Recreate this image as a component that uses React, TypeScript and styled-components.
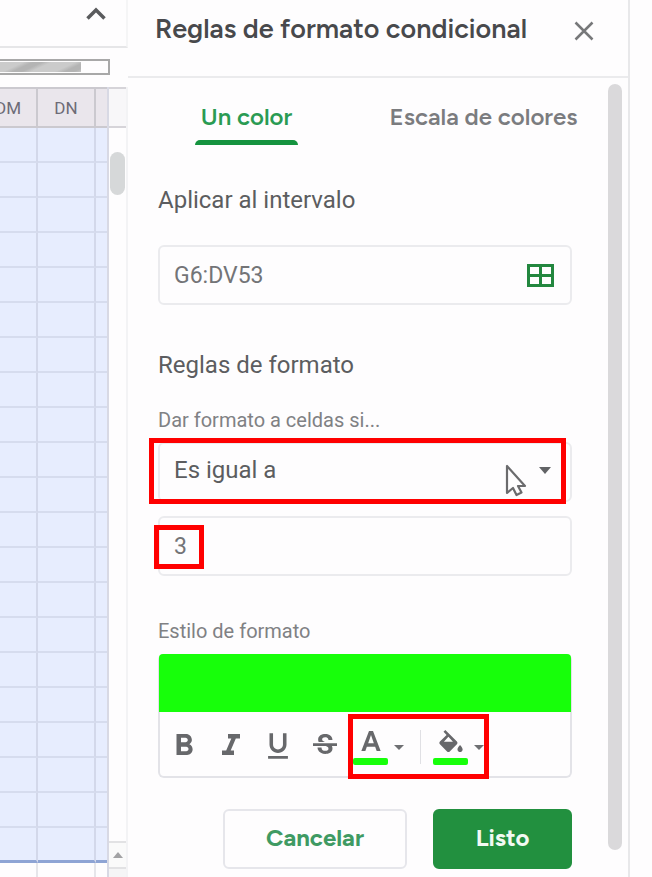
import React, { useState } from "react";
import styled, { createGlobalStyle } from "styled-components";
import {
  MdFormatBold,
  MdFormatItalic,
  MdFormatUnderlined,
  MdStrikethroughS,
} from "react-icons/md";

const GlobalStyle = createGlobalStyle`
  *, *::before, *::after { box-sizing: border-box; }
  body { margin: 0; background: #fefdfe; font-family: Roboto, sans-serif; }
  button, input, select { font: inherit; margin: 0; }
`;

const brand = '"Figtree", "Lato", sans-serif';

const Page = styled.div`
  display: flex;
  min-height: 100vh;
`;

/* ---------- spreadsheet strip ---------- */

const Sheet = styled.section`
  flex: 0 0 128px;
  display: flex;
  flex-direction: column;
  overflow: hidden;
`;

const SheetToolbar = styled.div`
  display: flex;
  justify-content: flex-end;
  height: 48px;
  padding: 6px 20px 0 0;
  border-bottom: 2px solid #e6e6e8;
  border-right: 2px solid #f5f5f6;
`;

const PlainButton = styled.button`
  display: grid;
  place-items: center;
  padding: 0;
  border: 0;
  background: none;
  color: #5a5b5d;
`;

const CollapseButton = styled(PlainButton)`
  width: 20px;
  height: 16px;
`;

const FormulaRow = styled.div`
  height: 39px;
  padding-top: 11px;
`;

const ProgressFrame = styled.div`
  width: 110px;
  height: 16px;
  padding: 1px 2px 1px 0;
  border: 2px solid #a8a8a8;
  border-left: 0;
`;

const ProgressFill = styled.div`
  width: 81px;
  height: 100%;
  background: repeating-linear-gradient(
    155deg,
    #cbcbcb 0 10px,
    #b4b4b4 14px 18px,
    #cbcbcb 22px
  );
`;

const SheetBody = styled.div`
  flex: 1;
  display: flex;
`;

const Cells = styled.table`
  width: 109px;
  align-self: flex-start;
  table-layout: fixed;
  border-collapse: separate;
  border-spacing: 0;
  border-right: 2px solid #d8d9e4;
`;

const ColumnHead = styled.th<{ $w: number }>`
  width: ${(p) => p.$w}px;
  height: 41px;
  padding: 0;
  border: solid #cbc9cf;
  border-width: 2px 2px 2px 0;
  background: #eae6ec;
  color: #6d6b76;
  font-size: 17px;
  font-weight: 400;
  &:last-child { border-right: 0; }
`;

const HeadText = styled.span<{ $clipped?: boolean }>`
  display: flex;
  justify-content: ${(p) => (p.$clipped ? "flex-end" : "center")};
  padding-right: ${(p) => (p.$clipped ? 15 : 0)}px;
`;

const Cell = styled.td<{ $last?: boolean }>`
  height: 35px;
  padding: 0;
  border: solid #d3d8ea;
  border-width: 0 2px 2px 0;
  border-bottom: ${(p) => (p.$last ? "3px solid #8ea4d4" : "2px solid #d6dcee")};
  background: #e7edfe;
  &:last-child { border-right: 0; }
`;

const EmptyCell = styled.td`
  height: 14px;
  padding: 0;
  border-right: 2px solid #e6e6ea;
  &:last-child { border-right: 0; }
`;

const SheetScroll = styled.div`
  flex: 1;
  display: flex;
  flex-direction: column;
  border-right: 2px solid #f3f3f5;
`;

const ScrollCorner = styled.div`
  height: 41px;
  background: #f8f7f9;
  border: solid #d6d4d9;
  border-width: 2px 0;
`;

const SheetThumb = styled.div`
  height: 43px;
  margin: 24px 1px 0;
  border-radius: 8px;
  background: #d6d8d9;
`;

const ScrollUp = styled(PlainButton)`
  height: 28px;
  margin-top: auto;
  border: solid #e2e2e4;
  border-width: 2px 0;
  background: #fafafa;
`;

const ScrollFoot = styled.div`
  height: 8px;
  background: #f5f5f6;
`;

/* ---------- side panel ---------- */

const Panel = styled.aside`
  flex: 1;
  min-width: 0;
  margin-right: 22px;
  display: flex;
  flex-direction: column;
  border-right: 2px solid #e8e8ea;
`;

const PanelHeader = styled.header`
  display: flex;
  align-items: center;
  justify-content: space-between;
  height: 78px;
  padding: 0 33px 18px 27px;
  border-bottom: 2px solid #ebebed;
`;

const Title = styled.h1`
  margin: 0;
  font: 600 27px/34px ${brand};
  color: #48494c;
  white-space: nowrap;
`;

const CloseButton = styled(PlainButton)`
  width: 22px;
  height: 22px;
  margin-top: 4px;
`;

const PanelBody = styled.div`
  flex: 1;
  display: flex;
`;

const ScrollTrack = styled.div`
  width: 20px;
  padding: 6px 6px 27px 0;
  display: flex;
`;

const ScrollThumb = styled.div`
  flex: 1;
  border-radius: 7px;
  background: #dad9db;
`;

const Content = styled.div`
  flex: 1;
  min-width: 0;
`;

const Tabs = styled.div`
  display: grid;
  grid-template-columns: 1fr 1fr;
  justify-items: center;
  height: 67px;
  margin-right: 6px;
`;

const Tab = styled.button<{ $active?: boolean }>`
  position: relative;
  padding: 10px 6px 0;
  border: 0;
  background: none;
  color: ${(p) => (p.$active ? "#2a9b53" : "#7b7c7f")};
  font: 600 24px/30px ${brand};
  white-space: nowrap;
  &::after {
    content: "";
    display: ${(p) => (p.$active ? "block" : "none")};
    position: absolute;
    left: 0;
    right: 0;
    bottom: 0;
    height: 5px;
    border-radius: 5px 5px 0 0;
    background: #15933f;
  }
`;

const Form = styled.form`
  display: flex;
  flex-direction: column;
  padding: 39px 36px 8px 30px;
`;

const SectionLabel = styled.label`
  height: 32px;
  margin-bottom: 29px;
  color: #5c5d60;
  font-size: 24px;
  line-height: 32px;
`;

const SectionTitle = styled.h2`
  margin: 44px 0 25px;
  color: #5c5d60;
  font-size: 24px;
  font-weight: 400;
  line-height: 32px;
`;

const SmallLabel = styled.label`
  height: 28px;
  margin-bottom: 8px;
  color: #808184;
  font-size: 20px;
  line-height: 28px;
`;

const GroupLabel = styled.div`
  margin: 41px 0 9px;
  color: #808184;
  font-size: 20px;
  line-height: 28px;
`;

const Field = styled.div<{ $spaced?: boolean; $raised?: boolean }>`
  position: relative;
  display: flex;
  align-items: center;
  height: 60px;
  margin-top: ${(p) => (p.$spaced ? 14 : 0)}px;
  padding: 0 16px ${(p) => (p.$raised ? 4 : 0)}px 14px;
  border: 2px solid #ebebee;
  border-radius: 6px;
`;

const TextInput = styled.input`
  flex: 1;
  min-width: 0;
  padding: 0;
  border: 0;
  outline: 0;
  background: none;
  color: #737477;
  font-size: 23px;
`;

const Select = styled.select`
  flex: 1;
  min-width: 0;
  height: 48px;
  padding: 0;
  border: 0;
  outline: 0;
  appearance: none;
  background: none;
  color: #5c5d60;
  font-size: 24px;
`;

const SelectCaret = styled.svg`
  flex: none;
  width: 12px;
  height: 7px;
  margin-right: 3px;
`;

const Pointer = styled.svg`
  position: absolute;
  top: 19px;
  right: 42px;
  width: 24px;
  height: 36px;
`;

const Highlight = styled.span<{ $inset: string; $width?: string }>`
  position: absolute;
  inset: ${(p) => p.$inset};
  width: ${(p) => p.$width ?? "auto"};
  border: 5px solid #ff0000;
  pointer-events: none;
`;

const StyleBox = styled.div`
  border: 2px solid #e3e3e8;
  border-top: 0;
  border-radius: 6px;
`;

const Preview = styled.div`
  height: 58px;
  margin: 0 -1px;
  border-radius: 4px 4px 0 0;
  background: #17ff0a;
`;

const FormatBar = styled.div`
  display: flex;
  height: 64px;
`;

const FormatButton = styled(PlainButton)`
  width: 47px;
  padding-top: 3px;
  color: #67686b;
`;

const ColorTools = styled.div`
  position: relative;
  display: flex;
  align-items: center;
  padding: 6px 0 0 5px;
`;

const ColorButton = styled(PlainButton)`
  display: flex;
  align-items: center;
  gap: 6px;
  color: #67686b;
`;

const ColorGlyph = styled.span`
  display: flex;
  flex-direction: column;
  align-items: center;
  gap: 6px;
  width: 35px;
  &::after {
    content: "";
    width: 35px;
    height: 7px;
    border-radius: 2px;
    background: #17ff0a;
  }
`;

const Divider = styled.span`
  width: 1px;
  height: 34px;
  margin: 0 12px 0 16px;
  background: #e0e0e4;
`;

const Actions = styled.div`
  display: flex;
  justify-content: flex-end;
  gap: 26px;
  margin-top: 31px;
`;

const ActionButton = styled.button<{ $primary?: boolean }>`
  width: ${(p) => (p.$primary ? 139 : 184)}px;
  height: 60px;
  padding: 0 0 2px;
  border: 2px solid ${(p) => (p.$primary ? "#22903f" : "#e6e6eb")};
  border-radius: 6px;
  background: ${(p) => (p.$primary ? "#22903f" : "#fefdfe")};
  color: ${(p) => (p.$primary ? "#f2faf3" : "#3f9a63")};
  font: 700 24px/32px ${brand};
`;

const SmallCaret = () => (
  <svg width="10" height="5" viewBox="0 0 10 5" aria-hidden="true">
    <path d="M0 0h10L5 5z" fill="#6f7073" />
  </svg>
);

const rows = Array.from({ length: 21 }, (_, i) => i);

export default function App() {
  const [range, setRange] = useState("G6:DV53");
  const [value, setValue] = useState("3");

  return (
    <>
      <GlobalStyle />
      <Page>
        <Sheet>
          <SheetToolbar>
            <CollapseButton aria-label="Ocultar menús">
              <svg width="20" height="14" viewBox="0 0 20 14">
                <path d="M1.500 11.500 10 3l8.500 8.500" fill="none" stroke="currentColor" strokeWidth="3.500" />
              </svg>
            </CollapseButton>
          </SheetToolbar>
          <FormulaRow>
            <ProgressFrame>
              <ProgressFill />
            </ProgressFrame>
          </FormulaRow>
          <SheetBody>
            <Cells>
              <thead>
                <tr>
                  <ColumnHead $w={38}>
                    <HeadText $clipped>DM</HeadText>
                  </ColumnHead>
                  <ColumnHead $w={58}>
                    <HeadText>DN</HeadText>
                  </ColumnHead>
                  <ColumnHead $w={11} />
                </tr>
              </thead>
              <tbody>
                {rows.map((r) => {
                  const last = r === rows.length - 1;
                  return (
                    <tr key={r}>
                      <Cell $last={last} />
                      <Cell $last={last} />
                      <Cell $last={last} />
                    </tr>
                  );
                })}
                <tr>
                  <EmptyCell />
                  <EmptyCell />
                  <EmptyCell />
                </tr>
              </tbody>
            </Cells>
            <SheetScroll>
              <ScrollCorner />
              <SheetThumb />
              <ScrollUp aria-label="Desplazar hacia arriba">
                <svg width="10" height="6" viewBox="0 0 10 6">
                  <path d="M0 6h10L5 0z" fill="#a2a2a4" />
                </svg>
              </ScrollUp>
              <ScrollFoot />
            </SheetScroll>
          </SheetBody>
        </Sheet>

        <Panel>
          <PanelHeader>
            <Title>Reglas de formato condicional</Title>
            <CloseButton aria-label="Cerrar">
              <svg width="20" height="20" viewBox="0 0 20 20">
                <path d="m1.500 1.500 17 17m0-17-17 17" stroke="#77787a" strokeWidth="2.500" />
              </svg>
            </CloseButton>
          </PanelHeader>
          <PanelBody>
            <Content>
              <Tabs role="tablist">
                <Tab role="tab" aria-selected="true" $active>
                  Un color
                </Tab>
                <Tab role="tab" aria-selected="false">
                  Escala de colores
                </Tab>
              </Tabs>
              <Form onSubmit={(e) => e.preventDefault()}>
                <SectionLabel htmlFor="range">Aplicar al intervalo</SectionLabel>
                <Field>
                  <TextInput id="range" value={range} onChange={(e) => setRange(e.target.value)} />
                  <PlainButton type="button" aria-label="Seleccionar intervalo de datos">
                    <svg width="27" height="23" viewBox="0 0 27 23">
                      <path
                        d="M1.500 1.500h24v20h-24zM13.500 1.500v20M1.500 11.500h24"
                        fill="none"
                        stroke="#23873f"
                        strokeWidth="3"
                      />
                    </svg>
                  </PlainButton>
                </Field>

                <SectionTitle>Reglas de formato</SectionTitle>
                <SmallLabel htmlFor="condition">Dar formato a celdas si...</SmallLabel>
                <Field $raised>
                  <Select id="condition" defaultValue="eq">
                    <option value="eq">Es igual a</option>
                  </Select>
                  <SelectCaret viewBox="0 0 12 7" aria-hidden="true">
                    <path d="M0 0h12L6 7z" fill="#626366" />
                  </SelectCaret>
                  <Pointer viewBox="0 0 24 36" aria-hidden="true">
                    <path
                      d="M3 3v27l6-5 3.500 7 5-2.500-3.500-6.500h7z"
                      fill="#fefdfe"
                      stroke="#6b6b6d"
                      strokeWidth="2.200"
                      strokeLinejoin="round"
                    />
                  </Pointer>
                  <Highlight $inset="-6px 4px -4px -11px" />
                </Field>
                <Field $spaced>
                  <TextInput
                    aria-label="Valor o fórmula"
                    value={value}
                    onChange={(e) => setValue(e.target.value)}
                  />
                  <Highlight $inset="7px auto 5px -6px" $width="50px" />
                </Field>

                <GroupLabel>Estilo de formato</GroupLabel>
                <StyleBox role="group" aria-label="Estilo de formato">
                  <Preview />
                  <FormatBar>
                    <FormatButton type="button" aria-label="Negrita">
                      <MdFormatBold size={36} />
                    </FormatButton>
                    <FormatButton type="button" aria-label="Cursiva">
                      <MdFormatItalic size={36} />
                    </FormatButton>
                    <FormatButton type="button" aria-label="Subrayado">
                      <MdFormatUnderlined size={34} />
                    </FormatButton>
                    <FormatButton type="button" aria-label="Tachado">
                      <MdStrikethroughS size={32} />
                    </FormatButton>
                    <ColorTools>
                      <ColorButton type="button" aria-label="Color de texto">
                        <ColorGlyph>
                          <svg width="20" height="22" viewBox="6 3 12 13">
                            <path
                              d="M10.800 3.500 6.200 15.500h2.400l.9-2.600h5l.9 2.600h2.400L13.200 3.500zm-.5 7.400L12 5.900l1.700 5z"
                              fill="currentColor"
                            />
                          </svg>
                        </ColorGlyph>
                        <SmallCaret />
                      </ColorButton>
                      <Divider />
                      <ColorButton type="button" aria-label="Color de relleno">
                        <ColorGlyph>
                          <svg width="24" height="22" viewBox="3 0 18 17">
                            <path
                              d="M16.560 8.940 7.620 0 6.210 1.410l2.380 2.380-5.150 5.150c-.59.59-.59 1.540 0 2.120l5.500 5.500c.29.29.68.44 1.060.44s.77-.15 1.060-.44l5.500-5.500c.59-.58.59-1.530 0-2.120zM6.500 9 10 5.300 13.500 9zM19 11.500s-2 2.170-2 3.500c0 1.100.9 2 2 2s2-.9 2-2c0-1.330-2-3.500-2-3.500z"
                              fill="currentColor"
                            />
                          </svg>
                        </ColorGlyph>
                        <SmallCaret />
                      </ColorButton>
                      <Highlight $inset="2px -5px -3px 0" />
                    </ColorTools>
                  </FormatBar>
                </StyleBox>

                <Actions>
                  <ActionButton type="button">Cancelar</ActionButton>
                  <ActionButton type="submit" $primary>
                    Listo
                  </ActionButton>
                </Actions>
              </Form>
            </Content>
            <ScrollTrack>
              <ScrollThumb />
            </ScrollTrack>
          </PanelBody>
        </Panel>
      </Page>
    </>
  );
}
